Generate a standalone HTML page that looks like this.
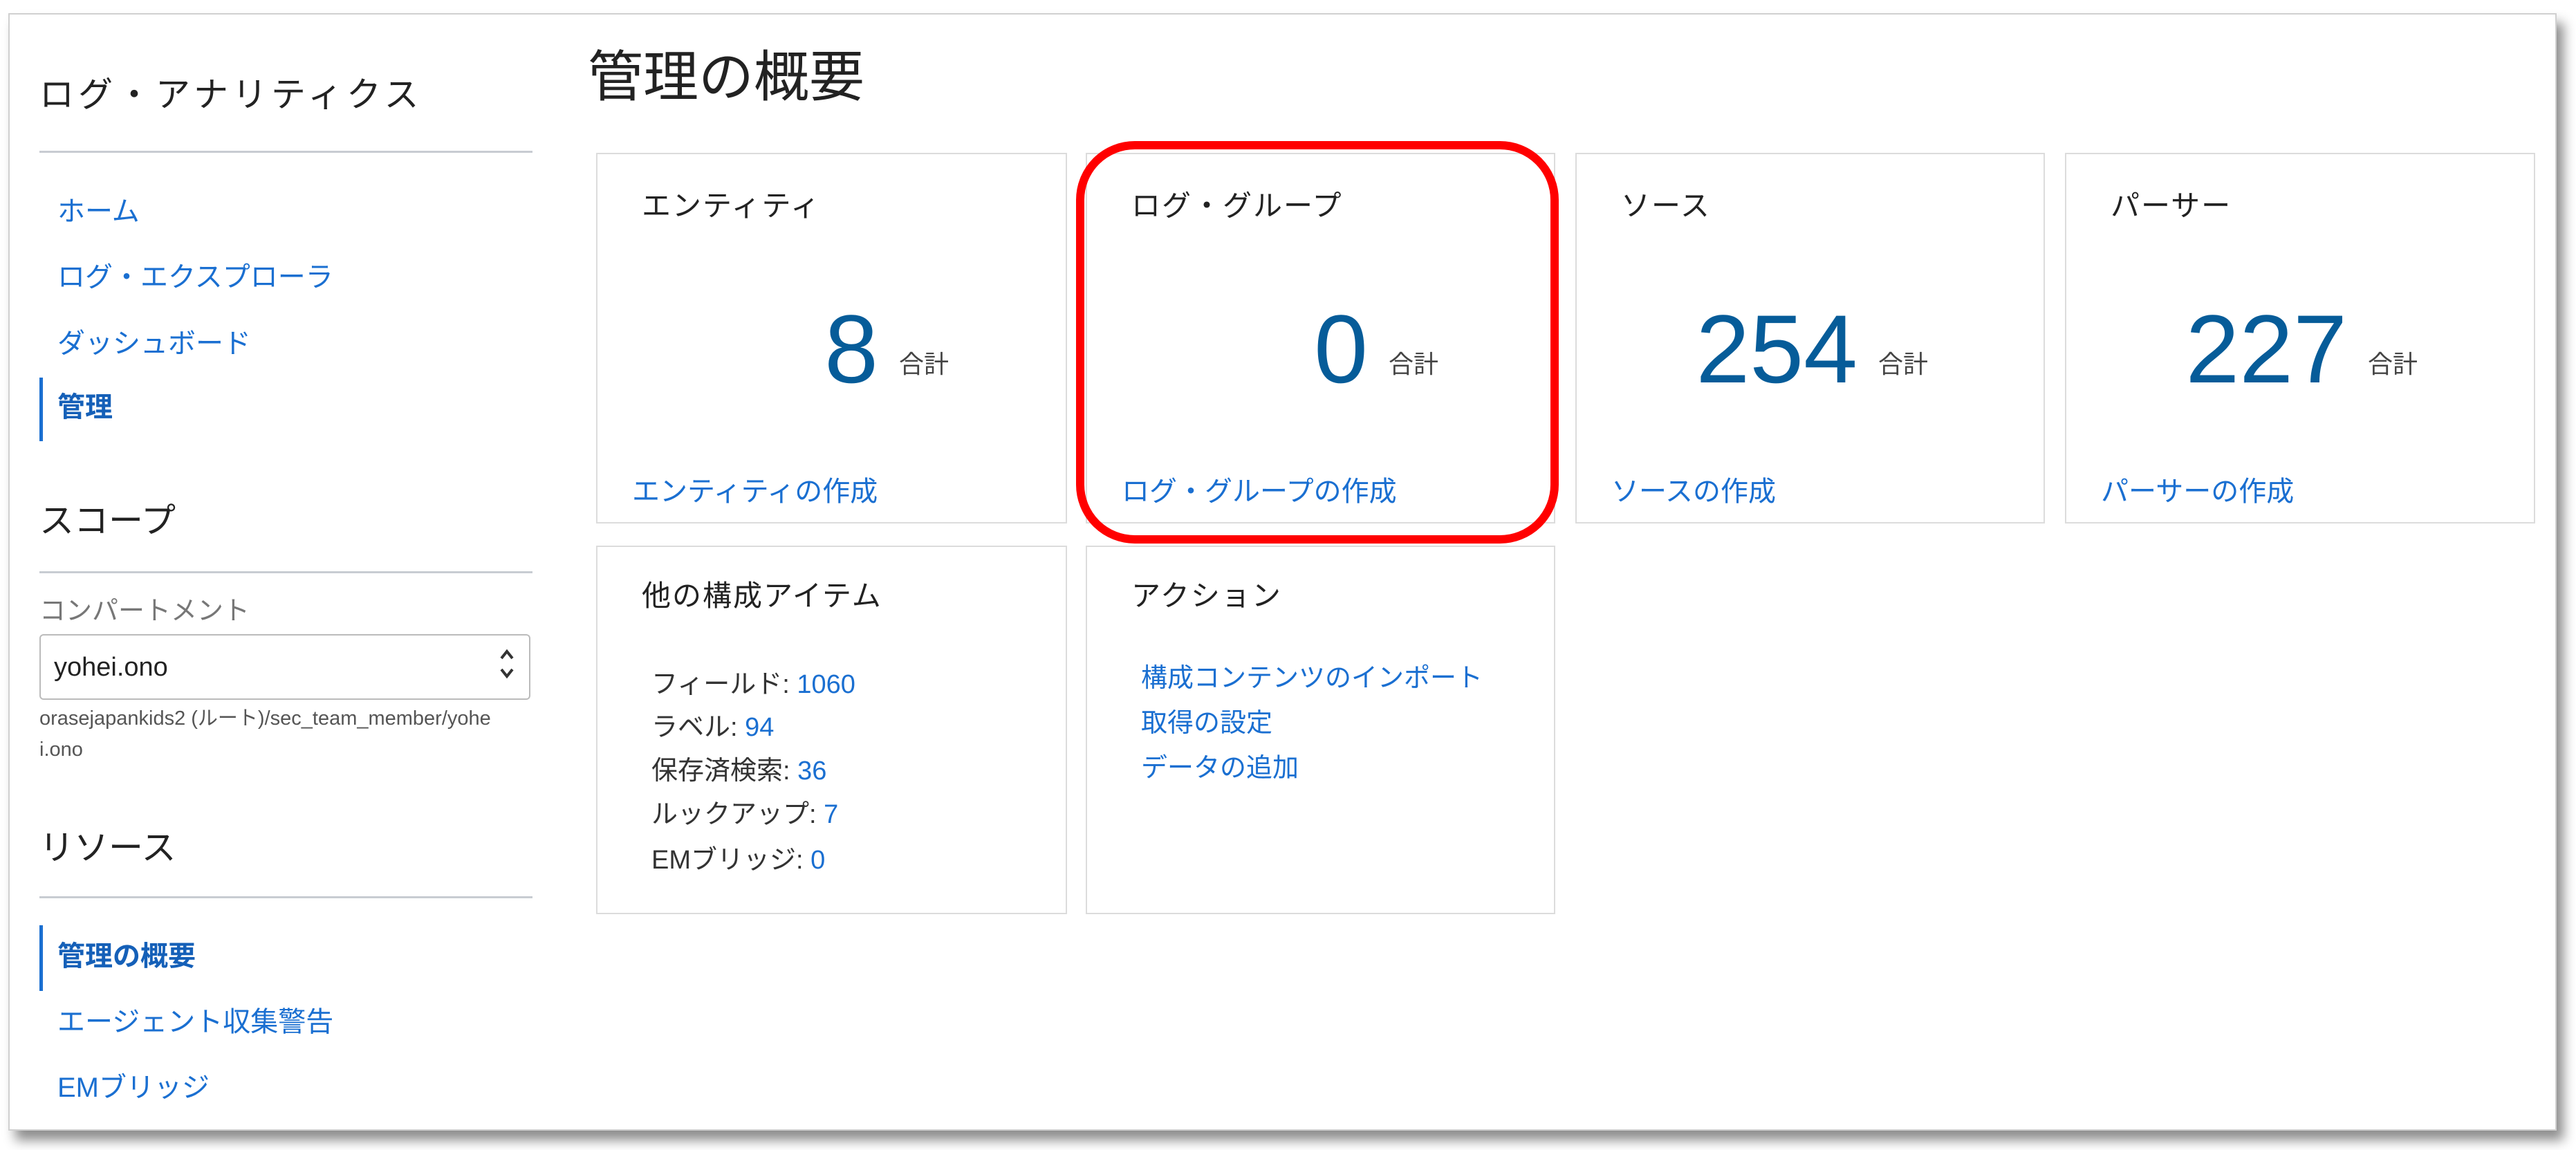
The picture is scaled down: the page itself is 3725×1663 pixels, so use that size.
<!DOCTYPE html>
<html><head><meta charset="utf-8"><style>
*{margin:0;padding:0;box-sizing:border-box}
body{width:3725px;height:1663px;background:#fff;position:relative;overflow:hidden;font-family:"Liberation Sans","Noto Sans CJK JP",sans-serif;color:#222}
.frame{position:absolute;left:12px;top:19px;width:3685px;height:1616px;border:2px solid #d0d0d0;background:#fff;box-shadow:10px 14px 16px rgba(0,0,0,.45)}
.a{position:absolute;white-space:nowrap;line-height:1}
.h{font-size:50px;color:#222}
.hr{position:absolute;left:57px;width:713px;height:3px;background:#c8ccd2}
.nav{font-size:40px;color:#1a6fd1;left:83px}
.bar{position:absolute;left:57px;width:5px;background:#1a6fd1}
.card{position:absolute;border:2px solid #dcdcdc;background:#fff}
.ct{position:absolute;left:64px;top:54px;font-size:42px;color:#222;white-space:nowrap;line-height:1;letter-spacing:2px}
.num{position:absolute;left:0;width:406px;text-align:right;top:212px;font-size:140px;color:#065c99;line-height:1}
.tot{position:absolute;left:436px;top:286px;font-size:36px;color:#444;line-height:1}
.lk{position:absolute;left:50px;top:468px;font-size:40px;color:#1a6fd1;line-height:1;white-space:nowrap}
.li{position:absolute;left:78px;font-size:38px;color:#333;line-height:1;white-space:nowrap}
.li b{font-weight:normal;color:#1a6fd1}
</style></head><body>
<div class="frame"></div>
<div class="a h" style="left:57px;top:112px;letter-spacing:6px">ログ・アナリティクス</div>
<div class="hr" style="top:218px"></div>
<div class="a nav" style="top:286px">ホーム</div>
<div class="a nav" style="top:381px">ログ・エクスプローラ</div>
<div class="a nav" style="top:477px">ダッシュボード</div>
<div class="bar" style="top:546px;height:92px"></div>
<div class="a nav" style="top:569px;font-weight:bold;color:#1560b8">管理</div>
<div class="a h" style="left:57px;top:728px">スコープ</div>
<div class="hr" style="top:826px"></div>
<div class="a" style="left:57px;top:865px;font-size:38px;color:#777">コンパートメント</div>
<div style="position:absolute;left:57px;top:917px;width:710px;height:95px;border:2px solid #bbb;border-radius:6px"></div>
<div class="a" style="left:78px;top:946px;font-size:38px;color:#222">yohei.ono</div>
<svg style="position:absolute;left:720px;top:930px" width="26" height="60" viewBox="0 0 26 60"><path d="M5 22 L13 12 L21 22 M5 38 L13 48 L21 38" fill="none" stroke="#333" stroke-width="4"/></svg>
<div class="a" style="left:57px;top:1025px;font-size:29px;color:#555">orasejapankids2 (ルート)/sec_team_member/yohe</div>
<div class="a" style="left:57px;top:1070px;font-size:29px;color:#555">i.ono</div>
<div class="a h" style="left:57px;top:1201px">リソース</div>
<div class="hr" style="top:1296px"></div>
<div class="bar" style="top:1338px;height:95px"></div>
<div class="a nav" style="top:1363px;font-weight:bold;color:#1560b8">管理の概要</div>
<div class="a nav" style="top:1458px">エージェント収集警告</div>
<div class="a nav" style="top:1553px">EMブリッジ</div>

<div class="a" style="left:850px;top:72px;font-size:80px;color:#222">管理の概要</div>

<div class="card" style="left:862px;top:221px;width:681px;height:536px"><div class="ct">エンティティ</div><div class="num">8</div><div class="tot">合計</div><div class="lk">エンティティの作成</div></div>
<div class="card" style="left:1570px;top:221px;width:679px;height:536px"><div class="ct">ログ・グループ</div><div class="num">0</div><div class="tot">合計</div><div class="lk">ログ・グループの作成</div></div>
<div class="card" style="left:2278px;top:221px;width:679px;height:536px"><div class="ct">ソース</div><div class="num">254</div><div class="tot">合計</div><div class="lk">ソースの作成</div></div>
<div class="card" style="left:2986px;top:221px;width:680px;height:536px"><div class="ct">パーサー</div><div class="num">227</div><div class="tot">合計</div><div class="lk">パーサーの作成</div></div>

<div class="card" style="left:862px;top:789px;width:681px;height:533px"><div class="ct" style="top:50px">他の構成アイテム</div>
<div class="li" style="top:180px">フィールド: <b>1060</b></div>
<div class="li" style="top:242px">ラベル: <b>94</b></div>
<div class="li" style="top:305px">保存済検索: <b>36</b></div>
<div class="li" style="top:368px">ルックアップ: <b>7</b></div>
<div class="li" style="top:434px">EMブリッジ: <b>0</b></div></div>
<div class="card" style="left:1570px;top:789px;width:679px;height:533px"><div class="ct" style="top:50px">アクション</div>
<div class="li" style="top:171px;color:#1a6fd1">構成コンテンツのインポート</div>
<div class="li" style="top:236px;color:#1a6fd1">取得の設定</div>
<div class="li" style="top:301px;color:#1a6fd1">データの追加</div></div>

<div style="position:absolute;left:1556px;top:204px;width:698px;height:582px;border:12px solid #f00;border-radius:85px"></div>
</body></html>
